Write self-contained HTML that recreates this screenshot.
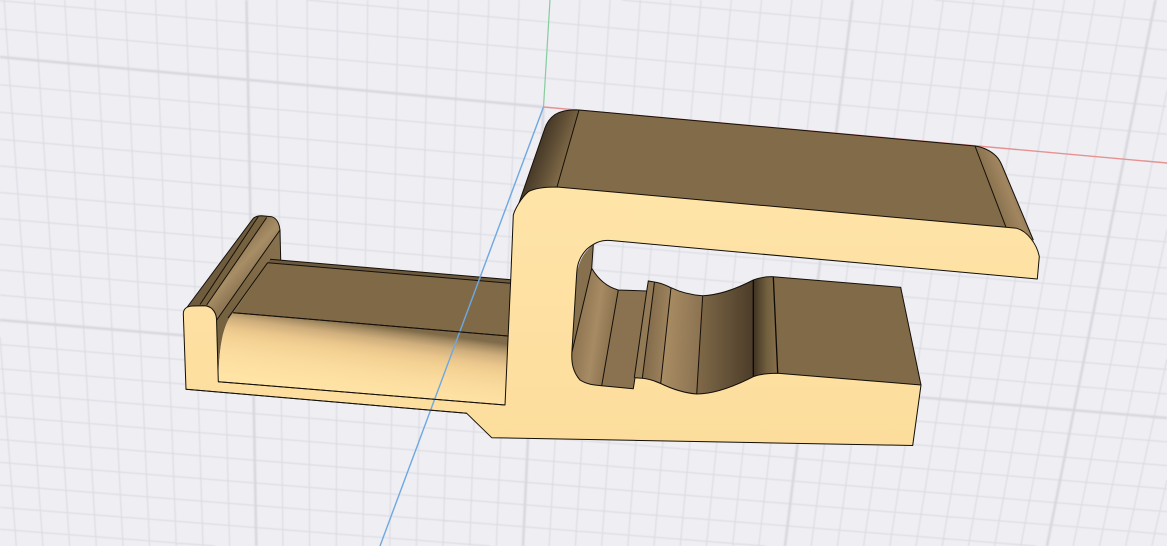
<!DOCTYPE html>
<html>
<head>
<meta charset="utf-8">
<title>3D model</title>
<style>
html,body{margin:0;padding:0;width:1167px;height:546px;overflow:hidden;background:#eeeef3}
#w{position:relative;width:1167px;height:546px;overflow:hidden}
svg{display:block;width:1167px;height:546px;overflow:hidden}
.minor{filter:blur(.5px)}
.major{filter:blur(.9px)}
.model{filter:blur(.3px)}
</style>
</head>
<body>
<div id="w">
<svg width="1167" height="546" viewBox="0 0 1167 546" xmlns="http://www.w3.org/2000/svg">
<defs>
<linearGradient id="tray" gradientUnits="userSpaceOnUse" x1="350" y1="322" x2="340.2" y2="392">
<stop offset="0" stop-color="#7f6a49"/>
<stop offset=".08" stop-color="#a88e64"/>
<stop offset=".18" stop-color="#cfae7c"/>
<stop offset=".32" stop-color="#eac68c"/>
<stop offset=".45" stop-color="#f4d294"/>
<stop offset=".65" stop-color="#fbdc9f"/>
<stop offset="1" stop-color="#ffe4a6"/>
</linearGradient>
<linearGradient id="front" gradientUnits="userSpaceOnUse" x1="0" y1="190" x2="0" y2="445">
<stop offset="0" stop-color="#ffe4a8"/>
<stop offset="1" stop-color="#fcdd9c"/>
</linearGradient>
<linearGradient id="cornerL" gradientUnits="userSpaceOnUse" x1="535" y1="142" x2="570" y2="155">
<stop offset="0" stop-color="#3d3122"/>
<stop offset=".5" stop-color="#5f4e35"/>
<stop offset="1" stop-color="#846d4a"/>
</linearGradient>
<linearGradient id="cornerR" gradientUnits="userSpaceOnUse" x1="985" y1="195" x2="1025" y2="180">
<stop offset="0" stop-color="#7f6947"/>
<stop offset=".55" stop-color="#a18660"/>
<stop offset="1" stop-color="#826b49"/>
</linearGradient>
<linearGradient id="b0" gradientUnits="userSpaceOnUse" x1="578" y1="320" x2="612" y2="325">
<stop offset="0" stop-color="#8f7551"/>
<stop offset=".55" stop-color="#a68b64"/>
<stop offset="1" stop-color="#8d7450"/>
</linearGradient>
<linearGradient id="b3" gradientUnits="userSpaceOnUse" x1="645" y1="330" x2="670" y2="332">
<stop offset="0" stop-color="#80694a"/>
<stop offset="1" stop-color="#a0855e"/>
</linearGradient>
<linearGradient id="b4" gradientUnits="userSpaceOnUse" x1="665" y1="340" x2="702" y2="342">
<stop offset="0" stop-color="#a88c63"/>
<stop offset="1" stop-color="#8a7150"/>
</linearGradient>
<linearGradient id="b5" gradientUnits="userSpaceOnUse" x1="700" y1="340" x2="753" y2="340">
<stop offset="0" stop-color="#7d6747"/>
<stop offset="1" stop-color="#4c3d29"/>
</linearGradient>
<linearGradient id="b6" gradientUnits="userSpaceOnUse" x1="753" y1="330" x2="776" y2="330">
<stop offset="0" stop-color="#3d3121"/>
<stop offset=".6" stop-color="#72603f"/>
<stop offset="1" stop-color="#846d4a"/>
</linearGradient>
<linearGradient id="wallIn" gradientUnits="userSpaceOnUse" x1="225" y1="300" x2="280" y2="250">
<stop offset="0" stop-color="#76623f"/>
<stop offset="1" stop-color="#87704d"/>
</linearGradient>
<linearGradient id="wallRound" gradientUnits="userSpaceOnUse" x1="226" y1="255" x2="250" y2="277">
<stop offset="0" stop-color="#8a7250"/>
<stop offset=".55" stop-color="#a88e66"/>
<stop offset="1" stop-color="#8f7755"/>
</linearGradient>
</defs>

<rect width="1167" height="546" fill="#eeeef3"/>

<g class="minor">
<path fill="none" stroke="#d9dae1" stroke-width="1" d="
M0 337L16.3 546M4.1 0L42.9 546M34.4 0L69.6 546M64.7 0L96.3 546M95 0L123 546M125.3 0L149.6 546M155.6 0L176.3 546M185.9 0L203 546M216.2 0L229.6 546
M276.8 0L283 546M307.1 0L309.6 546M337.4 0L336.3 546M367.7 0L363 546M398 0L389.7 546M428.3 0L416.3 546M458.6 0L443 546M488.9 0L469.7 546M519.2 0L496.3 546
M579.8 0L549.2 546M610.1 0L575.4 546M640.4 0L601.6 546M670.7 0L627.8 546M701 0L654 546M731.3 0L680.2 546M761.6 0L706.4 546M791.9 0L732.6 546M822.2 0L758.8 546
M882.8 0L811.2 546M913.1 0L837.4 546M943.4 0L863.6 546M973.7 0L889.8 546M1004 0L916 546M1034.3 0L942.2 546M1064.6 0L968.4 546M1094.9 0L994.6 546M1125.2 0L1020.8 546
M1167 91L1073.2 546M1167 230L1099.4 546M1167 359L1125.6 546M1167 480L1151.8 546
M935 0L1167 21.5M622 0L1167 50.1M307 0L1167 78.6M0 .6L1167 106.6M0 28.9L1167 134.3
M0 84.7L1167 188.8M0 112.2L1167 215.6M0 139.3L1167 242M0 166L1167 268.1M0 192.5L1167 294M0 218.6L1167 319.4M0 244.5L1167 344.6M0 270L1167 369.5M0 295.1L1167 394
M0 344.5L1167 441.9M0 368.8L1167 465.6M0 392.7L1167 488.9M0 416.2L1167 511.7M0 439.5L1167 534.4M0 462.4L1036 546M0 485.1L765 546M0 507.4L490 546M0 529.3L215 546"/>
</g>

<g class="major">
<path fill="none" stroke="#d6d6dc" stroke-width="2.4" d="
M246.5 0L256.3 546M852.5 0L785 546M1155.5 0L1047 546
M543.5 107L523 546
M0 57L543.5 107M0 320L1167 418"/>
</g>

<g class="model">
<!-- axes -->
<path fill="none" stroke="#86cc9f" stroke-width="1.2" d="M550 0L543.5 107"/>
<path fill="none" stroke="#e79292" stroke-width="1.4" d="M543.5 107L1167 163"/>

<!-- left wall back surfaces -->
<path d="M185 310L253.3 218.3C256 216 258.5 215.7 261.7 215.7L271.7 216.7C276 218 279 222 280 230L216.7 320C215 311 211 306 205 306L193 306C189 306 187 308 185 310Z" fill="#76623f"/>
<path d="M185 310L253.3 218.3L258.3 216.5L200 305L193 306C189 306 187 308 185 310Z" fill="#6f5c3e"/>
<path d="M206.7 305L266.7 217L271.7 216.7C276 218 279 222 280 230L216.7 320C215 311 212 307 206.7 305Z" fill="url(#wallRound)"/>
<path d="M216.7 320L280 230L280.7 260L270 259.3L233.3 312.7C222 325 219 350 218.3 381.7Z" fill="url(#wallIn)"/>

<!-- tray -->
<path d="M270 259.3L511 279.7L508 336L233.3 312.7Z" fill="#7f6947"/>
<path d="M270 259.3L511 279.7L510.6 283.3L267.6 262.7Z" fill="#6d5a3e"/>
<path d="M233.3 312.7L508 336L505 405L218.3 381.7C219 350 222 325 233.3 312.7Z" fill="url(#tray)"/>
<path fill="none" stroke="#15100a" stroke-width="1" d="M185 310L253.3 218.3C256 216 258.5 215.7 261.7 215.7L271.7 216.7C276 218 279 222 280 230L280.7 260M200 304.5L258.3 216.5M206.7 305L266.7 217.5M216.7 320L280 230M270 259.3L511 279.7M267.6 262.7L510.6 283.3M267.6 262.7L228 318M233.3 312.7L508 336"/>

<!-- upper arm back -->
<path d="M557 187L579 110L975 146L1006 227.3Z" fill="#816b49"/>
<path d="M518 205L544.3 130C546 124 550 118 555 114.5C561 111 570 109.6 579 110L557 187C540 186 528 192 518 205Z" fill="url(#cornerL)"/>
<path d="M975 146C983 147 991 151 996 156C999 159 1000.5 162 1001.8 165L1034 242L1006 227.3Z" fill="url(#cornerR)"/>
<path fill="none" stroke="#15100a" stroke-width="1" d="M519 203L544.3 130C546 124 550 118 555 114.5C561 111 570 109.6 579 110L975 146C983 147 991 151 996 156C999 159 1000.5 162 1001.8 165L1033.3 240M579 110L557 187M975 146L1006 227.3"/>

<!-- lower jaw back bands -->
<path d="M593.3 245C586 250 580 258 577 272L572 352L591.7 268.3Z" fill="#87704d"/>
<path d="M591.7 268.3L572 352C571 363 573 372 580 380C586 384 593 385 601.7 385.7L618.3 290C607 287 598 279 591.7 268.3Z" fill="url(#b0)"/>
<path d="M618.3 290L646.7 291L634 389L601.7 385.7Z" fill="#8a7250"/>
<path d="M646.7 291L648.3 281L654.5 282L642.3 378.3L634.3 377.7Z" fill="#927a56"/>
<path d="M654.5 282C662 283 667 286 671 287.7L660.7 383.5C655 381 650 379 642.3 378.3Z" fill="url(#b3)"/>
<path d="M671 287.7C681 292.5 691 295 702.7 295.7L696.7 394C684 393 672 389 660.7 383.5Z" fill="url(#b4)"/>
<path d="M702.7 295.7C720 295 738 288 753.3 280L753.3 376.7C735 386 715 394 696.7 394Z" fill="url(#b5)"/>
<path d="M753.3 280C760 277.5 767 276.5 773.3 276.7L777.7 373.3C768 373.3 760 374 753.3 376.7Z" fill="url(#b6)"/>
<path d="M773.3 276.7L900.7 287.3L921 385L777.7 373.3Z" fill="#806a48"/>

<path fill="none" stroke="#15100a" stroke-width="1" d="M593.3 245L591.7 268.3C598 279 607 287 618.3 290L646.7 291L648.3 281L654.5 282C662 283 667 286 671 287.7C681 292.5 691 295 702.7 295.7C720 295 738 288 753.3 280C760 277.5 767 276.5 773.3 276.7L900.7 287.3L921 385
M591.7 268.3L572 352M618.3 290L601.7 385.7M646.7 291L634.3 377.7M654.5 282L642.3 378.3M671 287.7L660.7 383.5M702.7 295.7L696.7 394"/>
<path fill="none" stroke="#0c0905" stroke-width="1.3" d="M753.3 280L753.3 376.7M773.3 276.7L777.7 373.3"/>

<!-- yellow front face -->
<path fill="url(#front)" stroke="#120e08" stroke-width="1" stroke-linejoin="round" d="M183.3 313.5C183.6 308 188 306 193 306L204 305.8C211 306 216 311 216.5 319L218.3 381.7L505 405L510.7 280L513.3 215C515 209 521 198 528.3 191.7C535 188 545 187 557 187L1006 227.3L1016.7 228.3C1027 231 1037 244 1039.3 256.7L1037.3 279L610.7 240.5C600 239.5 593 244 587 249C580 256 577 265 576.7 273L572 350C571 363 573 372 580 380C586 384 593 385 601.7 385.7L633.3 388.7L635 377.7L642.3 378.3C650 379 655 381 660.7 383.5C672 389 684 393 696.7 394C715 394 735 386 753.3 376.7C760 374 768 373.3 777.7 373.3L921 385L912.7 445.5L491.7 437.7L466.7 413.3L186 389.3Z"/>

<!-- blue axis -->
<path fill="none" stroke="#6ea8e2" stroke-width="1.4" d="M543.5 107L380 546"/>
<path fill="none" stroke="#15100a" stroke-width="1" d="M233.3 312.7L508 336M218.3 381.7L505 405M186 389.3L466.7 413.3"/>
</g>
</svg>
</div>
</body>
</html>
